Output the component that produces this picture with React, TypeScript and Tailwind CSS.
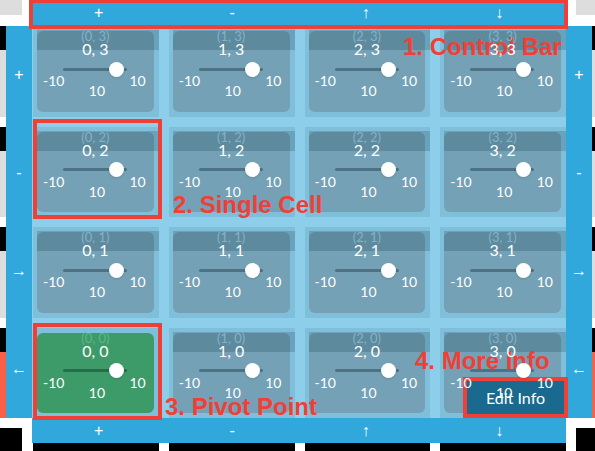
import React from 'react';

const COLS = [0, 1, 2, 3];
const ROWS = [3, 2, 1, 0];
const CONTROLS = ['+', '-', '↑', '↓'];
const SIDE = ['+', '-', '→', '←'];

const Cell: React.FC<{ x: number; y: number }> = ({ x, y }) => {
  const pivot = x === 0 && y === 0;
  return (
    <div className="relative pl-[4px] pr-[5px] pt-[5px] pb-[5px] bg-[#80bfd9]">
      <div className={`h-full rounded-[6px] ${pivot ? 'bg-[#3d9b6a]' : 'bg-[#74a1b5]'}`}>
        <div className="relative z-10 flex flex-col items-center text-white font-['Lato',sans-serif]">
          <div className={`text-[13px] leading-[11px] ${pivot ? 'text-[#5db685]' : 'text-[#83b2c7]'}`}>
            ({x}, {y})
          </div>
          <div className="text-[16px] leading-[14px]">{x}, {y}</div>
          {/* slider */}
          <div className="mt-[5px] h-[16px] w-full flex items-center pl-[26px]">
            <div className={`relative w-[64px] h-[3px] rounded-full ${pivot ? 'bg-[#2a6b49]' : 'bg-[#4c7284]'}`}>
              <div className="absolute left-[46px] top-[-6px] w-[15px] h-[15px] rounded-full bg-white shadow-sm" />
            </div>
          </div>
          <div className="-mt-[4px] w-full flex justify-between items-start pl-[6px] pr-[8px] text-[14px] leading-[16px]">
            <span>-10</span>
            <span className="mt-[10px]">10</span>
            <span>10</span>
          </div>
        </div>
      </div>
      {!pivot && <div className="absolute left-[4px] right-0 top-[4px] h-[20px] bg-[#0b3346]/20" />}
    </div>
  );
};

const Strip: React.FC<{ width: string }> = ({ width }) => (
  <div className={`${width} grid grid-rows-4 gap-[10px] bg-white`}>
    {[0, 1, 2, 3].map(i => (
      <div key={i} className="flex flex-col">
        <div className="h-[24px] bg-black" />
        <div className={`flex-1 ${i === 3 ? 'bg-[#f96146]' : 'bg-[#dddddd]'}`} />
      </div>
    ))}
  </div>
);

const SideBar: React.FC = () => (
  <div className="w-[26px] grid grid-rows-4 bg-[#30a8dc] text-white text-[16px] font-['Liberation_Sans',sans-serif]">
    {SIDE.map(s => (
      <div key={s} className="flex items-center justify-center">{s}</div>
    ))}
  </div>
);

const ControlBar: React.FC = () => (
  <div className="w-[534px] h-full grid grid-cols-4 bg-[#30a8dc] text-white text-[16px] font-['Liberation_Sans',sans-serif]">
    {CONTROLS.map(c => (
      <div key={c} className="flex items-center justify-center">{c}</div>
    ))}
  </div>
);

const Note: React.FC<{ className: string; children: React.ReactNode }> = ({ className, children }) => (
  <div className={`absolute text-[24px] leading-[24px] font-bold text-[#ef4038] whitespace-nowrap font-['Liberation_Sans',sans-serif] ${className}`}>
    {children}
  </div>
);

const App: React.FC = () => {
  return (
    <div className="relative w-[595px] h-[451px] overflow-hidden bg-white">
      {/* top row */}
      <div className="flex h-[26px]">
        <div className="w-[32px]">
          <div className="w-[22px] h-[15px] bg-[#dddddd]" />
        </div>
        <ControlBar />
        <div className="w-[29px]">
          <div className="ml-[10px] w-[19px] h-[15px] bg-[#dddddd]" />
        </div>
      </div>

      {/* grid */}
      <div className="flex h-[392px]">
        <Strip width="w-[6px]" />
        <SideBar />
        <div className="w-[534px] pl-[1px] grid grid-cols-4 grid-rows-4 gap-[10px] bg-[#8dcfeb]">
          {ROWS.map(y => COLS.map(x => <Cell key={`${x}-${y}`} x={x} y={y} />))}
        </div>
        <SideBar />
        <Strip width="w-[3px]" />
      </div>

      {/* bottom row */}
      <div className="flex h-[33px]">
        <div className="w-[32px]">
          <div className="mt-[10px] w-[22px] h-[23px] bg-black" />
        </div>
        <div className="w-[534px] flex flex-col">
          <div className="h-[25px]">
            <ControlBar />
          </div>
          <div className="h-[8px] pl-[1px] grid grid-cols-4 gap-[10px]">
            {COLS.map(c => <div key={c} className="bg-black" />)}
          </div>
        </div>
        <div className="w-[29px]">
          <div className="ml-[10px] mt-[10px] w-[19px] h-[23px] bg-black" />
        </div>
      </div>

      {/* annotations */}
      <div className="absolute left-[29px] top-[-1px] w-[539px] h-[30px] border-4 border-[#ef4038]" />
      <Note className="left-[403px] top-[35px]">1. Control Bar</Note>
      <div className="absolute left-[33px] top-[119px] w-[129px] h-[100px] border-4 border-[#ef4038]" />
      <Note className="left-[173px] top-[193px]">2. Single Cell</Note>
      <div className="absolute left-[33px] top-[323px] w-[129px] h-[97px] border-4 border-[#ef4038]" />
      <Note className="left-[165px] top-[395px]">3. Pivot Point</Note>
      <Note className="left-[415px] top-[349px]">4. More Info</Note>
      <button className="absolute left-[463px] top-[377px] w-[105px] h-[41px] border-4 border-[#ef4038] bg-[#196a8e] text-white text-[16px] font-['Lato',sans-serif]">
        Edit Info
      </button>
    </div>
  );
};

export default App;
